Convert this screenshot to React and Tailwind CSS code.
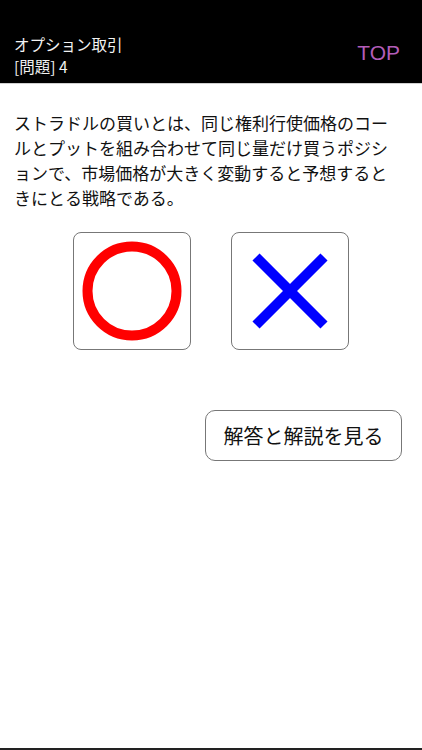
import * as React from "react"

const jp = { fontFamily: '"Noto Sans CJK JP", "Noto Sans", sans-serif' }

const Header = () => (
  <div className="h-[84px] bg-black flex items-end justify-between pl-[14px] pr-[22px] pb-[6px] border-b border-[#d0d0d0]">
    <div className="text-[#f2f2f2] text-[15.5px] leading-[22px]" style={jp}>
      <p>オプション取引</p>
      <p>[問題] 4</p>
    </div>
    <p className="text-[#b35db8] text-[21px] leading-none mb-[14px]" style={{ fontFamily: '"Liberation Sans", sans-serif' }}>TOP</p>
  </div>
)

const Maru = () => (
  <svg width="100" height="100" viewBox="0 0 100 100">
    <circle cx="50" cy="50" r="44.5" fill="none" stroke="#ff0000" strokeWidth="10" />
  </svg>
)

const Batsu = () => (
  <svg width="80" height="80" viewBox="0 0 80 80">
    <path d="M6 6 L74 74 M74 6 L6 74" stroke="#0000ff" strokeWidth="10" strokeLinecap="butt" />
  </svg>
)

const App = () => {
  return (
    <div className="min-h-[750px] bg-white flex flex-col" style={jp}>
      <Header />
      <p className="pl-[14px] pr-[24px] pt-[26px] text-[17px] leading-[25px] text-[#111]">
        ストラドルの買いとは、同じ権利行使価格のコールとプットを組み合わせて同じ量だけ買うポジションで、市場価格が大きく変動すると予想するときにとる戦略である。
      </p>
      <div className="flex justify-center gap-[40px] mt-[22px]">
        <button className="w-[118px] h-[118px] rounded-[8px] border border-[#777] bg-white flex items-center justify-center">
          <Maru />
        </button>
        <button className="w-[118px] h-[118px] rounded-[8px] border border-[#777] bg-white flex items-center justify-center">
          <Batsu />
        </button>
      </div>
      <div className="flex justify-end pr-[20px] mt-[60px]">
        <button className="w-[197px] h-[51px] rounded-[10px] border border-[#777] bg-white text-[20px] text-[#111]">
          解答と解説を見る
        </button>
      </div>
      <div className="flex-1" />
      <div className="h-[2px] bg-[#222]" />
    </div>
  )
}

export default App
